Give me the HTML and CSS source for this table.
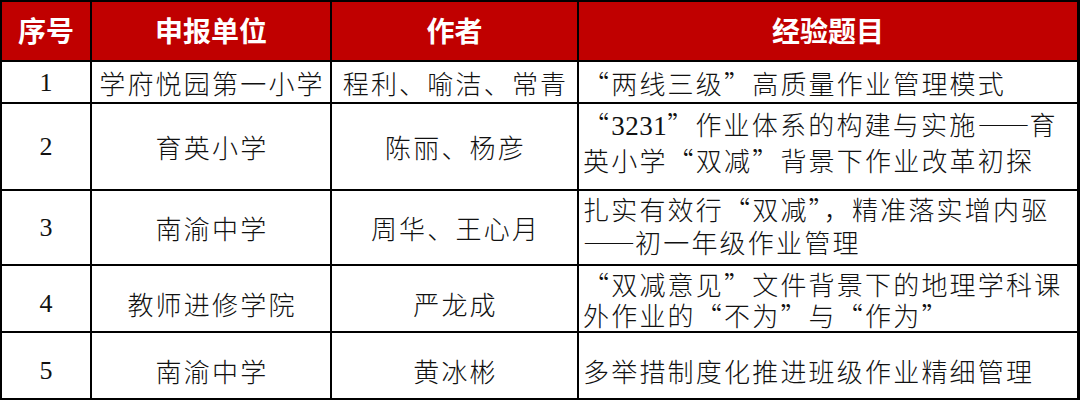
FILE: index.html
```html
<!DOCTYPE html>
<html lang="zh-CN">
<head>
<meta charset="utf-8">
<title>经验题目</title>
<link rel="stylesheet" href="styles.css">
</head>
<body>
<div class="table">
  <div class="cell h">序号</div>
  <div class="cell h">申报单位</div>
  <div class="cell h">作者</div>
  <div class="cell h">经验题目</div>

  <div class="cell num">1</div>
  <div class="cell c">学府悦园第一小学</div>
  <div class="cell c">程利、喻洁、常青</div>
  <div class="cell t"><div class="txt">“两线三级”高质量作业管理模式</div></div>

  <div class="cell num">2</div>
  <div class="cell c">育英小学</div>
  <div class="cell c">陈丽、杨彦</div>
  <div class="cell t up"><div class="txt">“<span class="lat">3231</span>”作业体系的构建与实施<span class="dash">——</span>育<br>英小学“双减”背景下作业改革初探</div></div>

  <div class="cell num">3</div>
  <div class="cell c">南渝中学</div>
  <div class="cell c">周华、王心月</div>
  <div class="cell t up3"><div class="txt">扎实有效行“双减”，精准落实增内驱<br><span class="dash">——</span>初一年级作业管理</div></div>

  <div class="cell num down">4</div>
  <div class="cell c down">教师进修学院</div>
  <div class="cell c down">严龙成</div>
  <div class="cell t tight"><div class="txt">“双减意见”文件背景下的地理学科课<br>外作业的“不为”与“作为”</div></div>

  <div class="cell num down">5</div>
  <div class="cell c down">南渝中学</div>
  <div class="cell c down">黄冰彬</div>
  <div class="cell t down"><div class="txt">多举措制度化推进班级作业精细管理</div></div>
</div>
</body>
</html>
```

FILE: styles.css
```css
html, body {
  margin: 0;
  padding: 0;
  background: #ffffff;
}

.table {
  width: 1080px;
  box-sizing: border-box;
  display: grid;
  grid-template-columns: 88px 238px 245px 498px;
  grid-template-rows: 58px 40px 85px 73px 65px 65px;
  gap: 2px;
  padding: 2px 3px 2px 2px;
  background: #000000;
  font-family: "Noto Sans CJK SC", "Noto Sans CJK JP", sans-serif;
  color: #111111;
}

.cell {
  background: #ffffff;
  display: flex;
  align-items: center;
  box-sizing: border-box;
  font-size: 26px;
  font-weight: 300;
  line-height: 33px;
  letter-spacing: 2.2px;
  white-space: nowrap;
  overflow: hidden;
}

.h {
  background: #c00000;
  color: #ffffff;
  font-weight: 700;
  font-size: 28px;
  letter-spacing: 0;
  justify-content: center;
  padding-bottom: 2px;
}

.num {
  justify-content: center;
  font-family: "Liberation Serif", serif;
  font-weight: 400;
  letter-spacing: 0;
}

.c {
  justify-content: center;
  padding-left: 2px;
}

.t {
  justify-content: flex-start;
  padding-left: 4px;
}

.txt {
  display: block;
}

.up {
  padding-bottom: 10px;
}

.up3 {
  padding-bottom: 6px;
}

.tight {
  line-height: 31px;
}

.down {
  padding-top: 10px;
}

.lat {
  font-family: "Liberation Serif", serif;
  font-weight: 400;
  font-size: 27px;
  letter-spacing: 0.5px;
}

.dash {
  letter-spacing: 0;
}
```
